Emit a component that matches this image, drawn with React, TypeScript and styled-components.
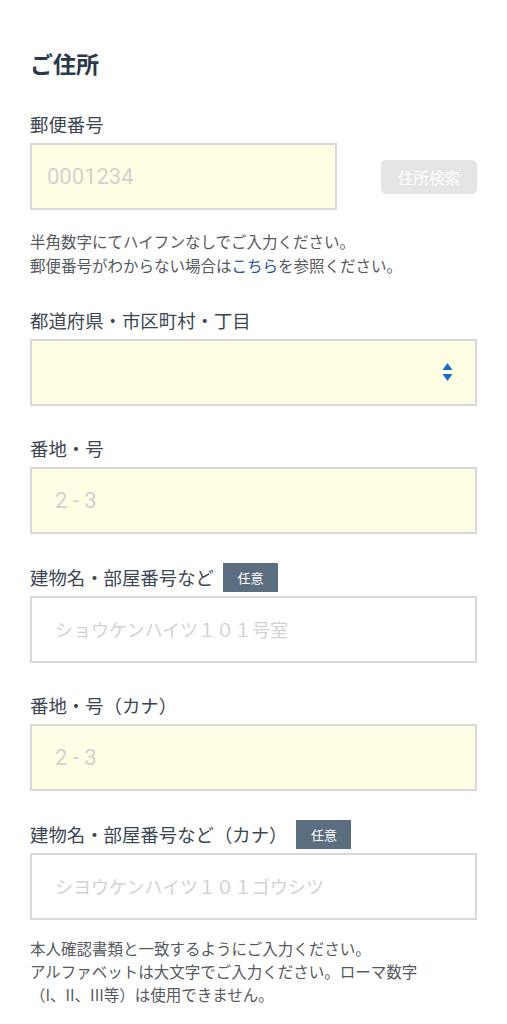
import styled, { createGlobalStyle } from "styled-components";

const GlobalStyle = createGlobalStyle`
  body {
    margin: 0;
    background: #ffffff;
    font-family: "Noto Sans CJK JP", "Noto Sans", sans-serif;
  }
  * {
    box-sizing: border-box;
  }
`;

const COLORS = {
  title: "#2b3848",
  label: "#3b4652",
  hint: "#555a60",
  border: "#d9d9d9",
  required: "#fffde3",
  placeholder: "#d2d2d2",
  badge: "#5b6e80",
  link: "#1f4fa8",
  arrow: "#1a6dc8",
};

const Page = styled.main`
  padding: 47px 30px 0;
`;

const Title = styled.h2`
  margin: 0 0 31px;
  font-size: 23px;
  line-height: 32px;
  font-weight: 700;
  color: ${COLORS.title};
`;

const Field = styled.section`
  margin-bottom: 28.5px;
`;

const LabelRow = styled.div`
  display: flex;
  align-items: center;
  gap: 9px;
  min-height: 29px;
  margin-bottom: 4px;
`;

const Label = styled.label`
  font-size: 18.4px;
  line-height: 29px;
  color: ${COLORS.label};
`;

const Badge = styled.span`
  display: inline-flex;
  align-items: center;
  justify-content: center;
  width: 55px;
  height: 29px;
  background: ${COLORS.badge};
  color: #ffffff;
  font-size: 13px;
`;

interface TextInputProps {
  $required?: boolean;
  $latin?: boolean;
  $inset?: number;
}

const TextInput = styled.input<TextInputProps>`
  display: block;
  width: 100%;
  height: 67px;
  margin: 0;
  padding: 0 0 0 ${({ $inset }) => $inset ?? 23}px;
  border: 2px solid ${COLORS.border};
  border-radius: 0;
  outline: none;
  background: ${({ $required }) => ($required ? COLORS.required : "#ffffff")};
  font-family: ${({ $latin }) =>
    $latin ? `Roboto, "Noto Sans CJK JP", sans-serif` : `"Noto Sans CJK JP", sans-serif`};
  font-size: ${({ $latin }) => ($latin ? "22px" : "18px")};
  color: ${COLORS.label};

  &::placeholder {
    color: ${COLORS.placeholder};
  }
`;

const PostalRow = styled.div`
  display: flex;
  align-items: center;
  gap: 44px;
`;

const PostalInput = styled(TextInput)`
  width: 307px;
  flex: none;
`;

const SearchButton = styled.button`
  flex: 1;
  height: 34px;
  border: none;
  border-radius: 5px;
  background: #e5e5e5;
  color: #ffffff;
  font-family: "Noto Sans CJK JP", sans-serif;
  font-size: 15.5px;
  padding: 0;
`;

interface HintProps {
  $gap?: number;
  $lineHeight?: number;
}

const Hint = styled.p<HintProps>`
  margin: ${({ $gap }) => $gap ?? 19}px 0 0;
  font-size: 15.5px;
  line-height: ${({ $lineHeight }) => $lineHeight ?? 24}px;
  color: ${COLORS.hint};
`;

const HintLink = styled.a`
  color: ${COLORS.link};
  text-decoration: none;
`;

const SelectWrap = styled.div`
  position: relative;
`;

const Select = styled.select`
  display: block;
  width: 100%;
  height: 67px;
  margin: 0;
  padding: 0 40px 0 23px;
  border: 2px solid ${COLORS.border};
  border-radius: 0;
  background: ${COLORS.required};
  appearance: none;
  outline: none;
  font-family: "Noto Sans CJK JP", sans-serif;
  font-size: 18px;
  color: ${COLORS.label};
`;

const SelectArrow = styled.svg`
  position: absolute;
  right: 24px;
  top: 50%;
  transform: translateY(-50%);
  pointer-events: none;
`;

function OptionalBadge() {
  return <Badge>任意</Badge>;
}

export default function App() {
  return (
    <>
      <GlobalStyle />
      <Page>
        <Title>ご住所</Title>

        <Field>
          <LabelRow>
            <Label>郵便番号</Label>
          </LabelRow>
          <PostalRow>
            <PostalInput $required $latin $inset={15} placeholder="0001234" />
            <SearchButton type="button">住所検索</SearchButton>
          </PostalRow>
          <Hint>
            半角数字にてハイフンなしでご入力ください。
            <br />
            郵便番号がわからない場合は<HintLink href="#">こちら</HintLink>
            を参照ください。
          </Hint>
        </Field>

        <Field>
          <LabelRow>
            <Label>都道府県・市区町村・丁目</Label>
          </LabelRow>
          <SelectWrap>
            <Select defaultValue="">
              <option value=""></option>
            </Select>
            <SelectArrow width="11" height="20" viewBox="0 0 11 20">
              <path d="M5.5 1 L10.5 8 L0.5 8 Z" fill={COLORS.arrow} />
              <path d="M0.5 12 L10.5 12 L5.5 19 Z" fill={COLORS.arrow} />
            </SelectArrow>
          </SelectWrap>
        </Field>

        <Field>
          <LabelRow>
            <Label>番地・号</Label>
          </LabelRow>
          <TextInput $required $latin placeholder="2 - 3" />
        </Field>

        <Field>
          <LabelRow>
            <Label>建物名・部屋番号など</Label>
            <OptionalBadge />
          </LabelRow>
          <TextInput placeholder="ショウケンハイツ１０１号室" />
        </Field>

        <Field>
          <LabelRow>
            <Label>番地・号（カナ）</Label>
          </LabelRow>
          <TextInput $required $latin placeholder="2 - 3" />
        </Field>

        <Field>
          <LabelRow>
            <Label>建物名・部屋番号など（カナ）</Label>
            <OptionalBadge />
          </LabelRow>
          <TextInput placeholder="シヨウケンハイツ１０１ゴウシツ" />
          <Hint $gap={17} $lineHeight={23}>
            本人確認書類と一致するようにご入力ください。
            <br />
            アルファベットは大文字でご入力ください。ローマ数字
            <br />
            （I、II、III等）は使用できません。
          </Hint>
        </Field>
      </Page>
    </>
  );
}
